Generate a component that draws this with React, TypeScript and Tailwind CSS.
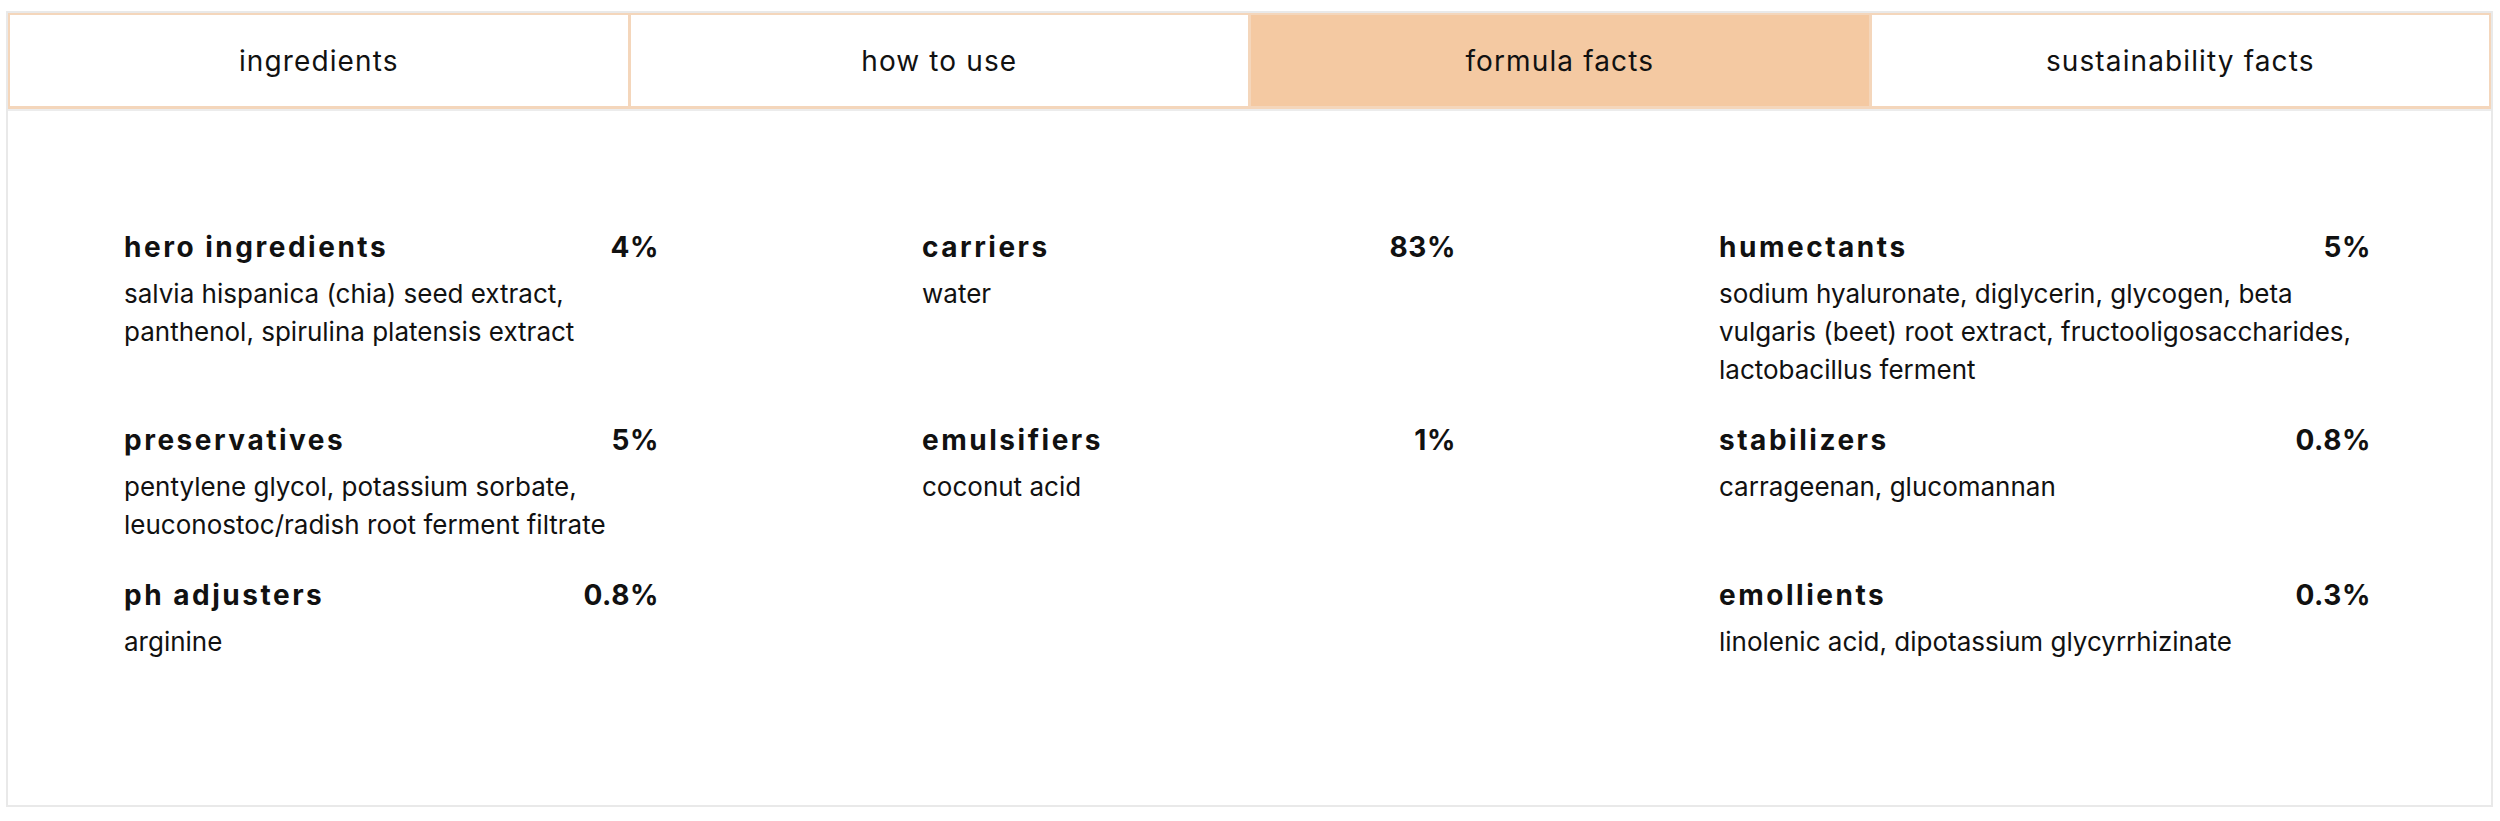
const tabs = ['ingredients', 'how to use', 'formula facts', 'sustainability facts'];

type Fact = { title: string; pct: string; body: string } | null;

// grid order: row by row, three columns
const facts: Fact[] = [
  { title: 'hero ingredients', pct: '4%', body: 'salvia hispanica (chia) seed extract, panthenol, spirulina platensis extract' },
  { title: 'carriers', pct: '83%', body: 'water' },
  {
    title: 'humectants',
    pct: '5%',
    body: 'sodium hyaluronate, diglycerin, glycogen, beta vulgaris (beet) root extract, fructooligosaccharides, lactobacillus ferment',
  },
  { title: 'preservatives', pct: '5%', body: 'pentylene glycol, potassium sorbate, leuconostoc/radish root ferment filtrate' },
  { title: 'emulsifiers', pct: '1%', body: 'coconut acid' },
  { title: 'stabilizers', pct: '0.8%', body: 'carrageenan, glucomannan' },
  { title: 'ph adjusters', pct: '0.8%', body: 'arginine' },
  null,
  { title: 'emollients', pct: '0.3%', body: 'linolenic acid, dipotassium glycyrrhizinate' },
];

export default function App() {
  const active = 2;
  return (
    <div className="w-[2500px] h-[821px] bg-white pt-[11px] pl-[6px]" style={{ fontFamily: 'Inter, "Noto Sans", sans-serif' }}>
      <div className="w-[2487px] h-[796px] border-2 border-[#e9e9e9] flex flex-col">
        {/* Tabs */}
        <div className="flex h-[96px] border-2 border-[#f4d6bb] border-b-[3px]">
          {tabs.map((t, i) => (
            <div
              key={t}
              className={`flex-1 flex items-center justify-center text-[28px] tracking-[0.04em] text-[#111] ${
                i > 0 ? 'border-l-[3px] border-[#f4d6bb]' : ''
              } ${i === active ? 'bg-[#f4c9a2]' : 'bg-white'}`}
            >
              {t}
            </div>
          ))}
        </div>
        <div className="border-t-2 border-[#ececec]" />

        {/* Facts grid */}
        <div className="pt-[118px] pl-[116px] grid grid-cols-[535px_534px_652px] gap-x-[263px] gap-y-[33px]">
          {facts.map((f, i) =>
            f ? (
              <div key={i}>
                <div className="flex items-baseline justify-between leading-[36px] text-[28px] font-bold text-[#111]">
                  <span className="tracking-[0.09em]">{f.title}</span>
                  <span className="tracking-[0.02em]">{f.pct}</span>
                </div>
                <p className="mt-[10px] text-[26px] leading-[38px] text-[#111]">{f.body}</p>
              </div>
            ) : (
              <div key={i} />
            )
          )}
        </div>
      </div>
    </div>
  );
}
